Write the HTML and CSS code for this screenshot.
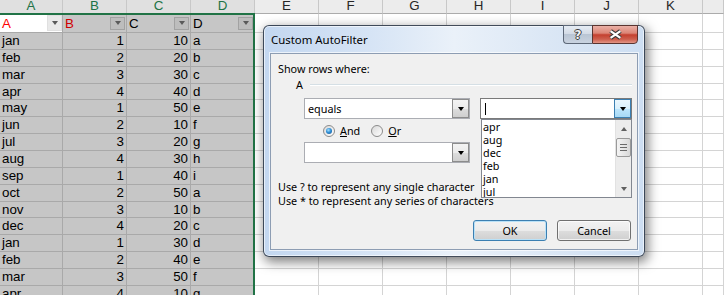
FILE: index.html
```html
<!DOCTYPE html>
<html>
<head>
<meta charset="utf-8">
<title>Custom AutoFilter</title>
<link rel="stylesheet" href="styles.css">
</head>
<body>
<div class="sheet">
  <div class="hc sel">A</div><div class="hc sel">B</div><div class="hc sel">C</div><div class="hc sel">D</div>
  <div class="hc">E</div><div class="hc">F</div><div class="hc">G</div><div class="hc">H</div><div class="hc">I</div><div class="hc">J</div><div class="hc">K</div><div class="hc"></div>

  <div class="fc act"><span class="red">A</span><span class="dd"></span></div>
  <div class="fc"><span class="red2">B</span><span class="dd"></span></div>
  <div class="fc"><span>C</span><span class="dd"></span></div>
  <div class="fc"><span>D</span><span class="dd"></span></div>
  <div class="e"></div><div class="e"></div><div class="e"></div><div class="e"></div><div class="e"></div><div class="e"></div><div class="e"></div><div class="e"></div>

  <div class="g">jan</div><div class="g n">1</div><div class="g n">10</div><div class="g">a</div>
  <div class="e"></div><div class="e"></div><div class="e"></div><div class="e"></div><div class="e"></div><div class="e"></div><div class="e"></div><div class="e"></div>
  <div class="g">feb</div><div class="g n">2</div><div class="g n">20</div><div class="g">b</div>
  <div class="e"></div><div class="e"></div><div class="e"></div><div class="e"></div><div class="e"></div><div class="e"></div><div class="e"></div><div class="e"></div>
  <div class="g">mar</div><div class="g n">3</div><div class="g n">30</div><div class="g">c</div>
  <div class="e"></div><div class="e"></div><div class="e"></div><div class="e"></div><div class="e"></div><div class="e"></div><div class="e"></div><div class="e"></div>
  <div class="g">apr</div><div class="g n">4</div><div class="g n">40</div><div class="g">d</div>
  <div class="e"></div><div class="e"></div><div class="e"></div><div class="e"></div><div class="e"></div><div class="e"></div><div class="e"></div><div class="e"></div>
  <div class="g">may</div><div class="g n">1</div><div class="g n">50</div><div class="g">e</div>
  <div class="e"></div><div class="e"></div><div class="e"></div><div class="e"></div><div class="e"></div><div class="e"></div><div class="e"></div><div class="e"></div>
  <div class="g">jun</div><div class="g n">2</div><div class="g n">10</div><div class="g">f</div>
  <div class="e"></div><div class="e"></div><div class="e"></div><div class="e"></div><div class="e"></div><div class="e"></div><div class="e"></div><div class="e"></div>
  <div class="g">jul</div><div class="g n">3</div><div class="g n">20</div><div class="g">g</div>
  <div class="e"></div><div class="e"></div><div class="e"></div><div class="e"></div><div class="e"></div><div class="e"></div><div class="e"></div><div class="e"></div>
  <div class="g">aug</div><div class="g n">4</div><div class="g n">30</div><div class="g">h</div>
  <div class="e"></div><div class="e"></div><div class="e"></div><div class="e"></div><div class="e"></div><div class="e"></div><div class="e"></div><div class="e"></div>
  <div class="g">sep</div><div class="g n">1</div><div class="g n">40</div><div class="g">i</div>
  <div class="e"></div><div class="e"></div><div class="e"></div><div class="e"></div><div class="e"></div><div class="e"></div><div class="e"></div><div class="e"></div>
  <div class="g">oct</div><div class="g n">2</div><div class="g n">50</div><div class="g">a</div>
  <div class="e"></div><div class="e"></div><div class="e"></div><div class="e"></div><div class="e"></div><div class="e"></div><div class="e"></div><div class="e"></div>
  <div class="g">nov</div><div class="g n">3</div><div class="g n">10</div><div class="g">b</div>
  <div class="e"></div><div class="e"></div><div class="e"></div><div class="e"></div><div class="e"></div><div class="e"></div><div class="e"></div><div class="e"></div>
  <div class="g">dec</div><div class="g n">4</div><div class="g n">20</div><div class="g">c</div>
  <div class="e"></div><div class="e"></div><div class="e"></div><div class="e"></div><div class="e"></div><div class="e"></div><div class="e"></div><div class="e"></div>
  <div class="g">jan</div><div class="g n">1</div><div class="g n">30</div><div class="g">d</div>
  <div class="e"></div><div class="e"></div><div class="e"></div><div class="e"></div><div class="e"></div><div class="e"></div><div class="e"></div><div class="e"></div>
  <div class="g">feb</div><div class="g n">2</div><div class="g n">40</div><div class="g">e</div>
  <div class="e"></div><div class="e"></div><div class="e"></div><div class="e"></div><div class="e"></div><div class="e"></div><div class="e"></div><div class="e"></div>
  <div class="g">mar</div><div class="g n">3</div><div class="g n">50</div><div class="g">f</div>
  <div class="e"></div><div class="e"></div><div class="e"></div><div class="e"></div><div class="e"></div><div class="e"></div><div class="e"></div><div class="e"></div>
  <div class="g">apr</div><div class="g n">4</div><div class="g n">10</div><div class="g">g</div>
  <div class="e"></div><div class="e"></div><div class="e"></div><div class="e"></div><div class="e"></div><div class="e"></div><div class="e"></div><div class="e"></div>
</div>

<div class="selection"></div>

<div class="dlg">
  <div class="tbar">
    <span class="title">Custom AutoFilter</span>
    <div class="tbtns">
      <span class="help"><span class="q">?</span></span>
      <span class="close">
        <svg width="45" height="18" viewBox="0 0 45 18">
          <path d="M18 5 L28 12 M28 5 L18 12" stroke="#3a3a3a" stroke-width="4.4" fill="none"/>
          <path d="M18 5 L28 12 M28 5 L18 12" stroke="#ffffff" stroke-width="2.2" fill="none"/>
        </svg>
      </span>
    </div>
  </div>
  <div class="client">
    <div class="show">Show rows where:</div>
    <div class="legend"><span>A</span><span class="rule"></span></div>
    <div class="crit">
      <div class="combo"><span class="txt">equals</span><span class="btn"></span></div>
      <div class="combo value">
        <span class="caret"></span><span class="btn hot"></span>
        <div class="list">
          <div class="items">
            <div>apr</div><div>aug</div><div>dec</div><div>feb</div><div>jan</div><div>jul</div>
          </div>
          <div class="sb">
            <span class="arr up"></span>
            <span class="thumb"><span></span><span></span><span></span></span>
            <span class="arr down"></span>
          </div>
        </div>
      </div>
    </div>
    <div class="radios">
      <span class="radio on"></span><span class="lbl"><u>A</u>nd</span>
      <span class="radio off"></span><span class="lbl"><u>O</u>r</span>
    </div>
    <div class="crit second">
      <div class="combo"><span class="txt"></span><span class="btn"></span></div>
    </div>
    <div class="hints">
      <div>Use ? to represent any single character</div>
      <div>Use * to represent any series of characters</div>
    </div>
    <div class="actions">
      <span class="pbtn def">OK</span>
      <span class="pbtn">Cancel</span>
    </div>
  </div>
</div>
</body>
</html>
```

FILE: styles.css
```css
* { box-sizing: border-box; }

html, body {
  margin: 0;
  padding: 0;
  width: 724px;
  height: 295px;
  overflow: hidden;
  background: #ffffff;
}

body {
  position: relative;
  font-family: "Liberation Sans", Arial, sans-serif;
}

/* ---------- spreadsheet ---------- */
.sheet {
  display: grid;
  grid-template-columns: 63px repeat(10, 64px) 21px;
  grid-template-rows: 14px 19px;
  grid-auto-rows: 16.87px;
  width: 724px;
  height: 295px;
  overflow: hidden;
  font-size: 13.33px;
  color: #000;
}

.hc {
  background: #ececec;
  border-right: 1px solid #c8c8c8;
  border-bottom: 1px solid #ababab;
  text-align: center;
  line-height: 11px;
  color: #262626;
  overflow: hidden;
}
.hc.sel {
  background: #e0e0e0;
  color: #217346;
  border-bottom-color: #217346;
}

.fc {
  display: flex;
  align-items: center;
  justify-content: space-between;
  padding-left: 2px;
  background: #c6c6c6;
  border-right: 1px solid #a9a9a9;
  border-bottom: 1px solid #a9a9a9;
}
.fc.act { background: #ffffff; }
.red { color: #ff0000; }
.red2 { color: #d00000; }

.dd {
  width: 15px;
  height: 13px;
  margin-right: 1px;
  background: #bdbdbd;
  border: 1px solid #a2a2a2;
  display: flex;
  align-items: center;
  justify-content: center;
}
.dd::after {
  content: "";
  border-left: 3.5px solid transparent;
  border-right: 3.5px solid transparent;
  border-top: 4px solid #5a5a5a;
}
.act .dd {
  height: 16px;
  margin-right: 0;
  background: #e9e9e9;
  border-color: #e0e0e0;
}

.g {
  background: #c6c6c6;
  border-right: 1px solid #a9a9a9;
  border-bottom: 1px solid #a9a9a9;
  padding: 0 2px;
  line-height: 16px;
  white-space: nowrap;
  overflow: hidden;
}
.g.n { text-align: right; }

.e {
  border-right: 1px solid #d4d4d4;
  border-bottom: 1px solid #d4d4d4;
}

.selection {
  position: absolute;
  left: -3px;
  top: 13px;
  width: 258px;
  height: 282px;
  border: 2px solid #217346;
  border-bottom: none;
}

/* ---------- dialog ---------- */
.dlg {
  position: absolute;
  left: 263px;
  top: 25px;
  width: 382px;
  height: 232px;
  border: 1px solid rgba(25, 35, 50, 0.8);
  border-radius: 6px;
  background: linear-gradient(90deg, #c3d7f0 0%, #d6e4f5 28%, #eaf1f9 50%, #dbe7f5 75%, #cddef2 100%);
  box-shadow: 2px 4px 12px 1px rgba(0, 0, 0, 0.5), inset 0 0 0 1px rgba(255, 255, 255, 0.6);
  display: flex;
  flex-direction: column;
  font-family: "Noto Sans", "Open Sans", sans-serif;
  font-size: 10.8px;
  color: #000;
}

.tbar {
  height: 27px;
  display: flex;
  align-items: flex-start;
  padding-left: 7px;
  padding-right: 6px;
}
.title {
  margin-top: 7px;
  font-size: 11.4px;
  line-height: 14px;
}
.tbtns {
  margin-left: auto;
  margin-top: -1px;
  display: flex;
}
.help {
  width: 29px;
  height: 19px;
  border: 1px solid #5d6878;
  border-right: none;
  border-radius: 0 0 0 4px;
  background: linear-gradient(#e6ecf4 0%, #d3dbe6 45%, #b9c5d4 50%, #c9d3e0 100%);
  display: flex;
  align-items: center;
  justify-content: center;
}
.q {
  font-family: "DejaVu Sans", sans-serif;
  font-weight: bold;
  font-size: 12px;
  line-height: 14px;
  color: #f2f2f2;
  text-shadow: 1px 0 0 #3c3c3c, -1px 0 0 #3c3c3c, 0 1px 0 #3c3c3c, 0 -1px 0 #3c3c3c;
}
.close {
  width: 46px;
  height: 19px;
  border: 1px solid #5a3430;
  border-radius: 0 0 4px 0;
  background: linear-gradient(#eab0a6 0%, #dc8576 42%, #c4402f 52%, #cd5f4e 78%, #e39686 100%);
  display: flex;
}

.client {
  flex: 1;
  margin: 0 6px 6px;
  background: #f0f0f0;
  border: 1px solid #8d9db3;
  box-shadow: 0 0 0 1px rgba(255, 255, 255, 0.65);
  display: flex;
  flex-direction: column;
}

.show {
  margin: 8px 0 0 7px;
  line-height: 14px;
}

.legend {
  display: flex;
  align-items: center;
  margin: 2px 0 0 25px;
  padding-right: 5px;
  line-height: 14px;
}
.rule {
  flex: 1;
  margin-left: 7px;
  height: 2px;
  border-top: 1px solid #d5dfe5;
  border-bottom: 1px solid #ffffff;
}

.crit {
  display: flex;
  margin: 6px 0 0 33px;
}
.crit.second { margin-top: 4px; }

.combo {
  position: relative;
  width: 166px;
  height: 21px;
  border: 1px solid #abadb3;
  background: #ffffff;
  display: flex;
  align-items: center;
}
.combo .txt {
  flex: 1;
  padding-left: 3px;
  line-height: 14px;
}
.combo .btn {
  width: 17px;
  height: 19px;
  margin-left: auto;
  border: 1px solid #8c8c8c;
  background: linear-gradient(#f3f3f3 0%, #ebebeb 50%, #dddddd 51%, #cfcfcf 100%);
  display: flex;
  align-items: center;
  justify-content: center;
}
.combo .btn::after {
  content: "";
  border-left: 3.5px solid transparent;
  border-right: 3.5px solid transparent;
  border-top: 4px solid #000;
}
.combo .btn.hot {
  border-color: #3c7fb1;
  background: linear-gradient(#eaf6fd 0%, #d9f0fc 50%, #bee6fd 51%, #a7d9f5 100%);
}

.combo.value {
  width: 152px;
  margin-left: 10px;
  border-color: #7a7a7a;
}
.caret {
  width: 1px;
  height: 12px;
  margin-left: 4px;
  background: #000;
}

.list {
  position: absolute;
  left: 0;
  top: 20px;
  width: 151px;
  height: 79px;
  border: 1px solid #828790;
  background: #ffffff;
  display: flex;
  z-index: 2;
}
.items {
  flex: 1;
  padding: 0 0 0 1px;
  line-height: 13px;
  overflow: hidden;
}
.sb {
  width: 16px;
  background: #ececec;
  border-left: 1px solid #e2e2e2;
  display: flex;
  flex-direction: column;
}
.arr {
  height: 17px;
  display: flex;
  align-items: center;
  justify-content: center;
}
.arr.up::after {
  content: "";
  border-left: 3.5px solid transparent;
  border-right: 3.5px solid transparent;
  border-bottom: 4px solid #606060;
}
.arr.down { margin-top: auto; }
.arr.down::after {
  content: "";
  border-left: 3.5px solid transparent;
  border-right: 3.5px solid transparent;
  border-top: 4px solid #606060;
}
.thumb {
  height: 19px;
  margin: 1px 0 0 0;
  border: 1px solid #9a9a9a;
  border-radius: 2px;
  background: linear-gradient(90deg, #f4f4f4, #e4e4e4 60%, #d8d8d8);
  display: flex;
  flex-direction: column;
  align-items: center;
  justify-content: center;
  gap: 2px;
}
.thumb span {
  width: 7px;
  height: 1px;
  background: #6a6a6a;
}

.radios {
  display: flex;
  align-items: center;
  height: 14px;
  margin: 5px 0 0 52px;
}
.radio {
  width: 12px;
  height: 12px;
  border-radius: 50%;
  border: 1px solid #8b8b8b;
  background: linear-gradient(135deg, #d9d9d9, #ffffff);
  display: flex;
  align-items: center;
  justify-content: center;
}
.radio.on::after {
  content: "";
  width: 6px;
  height: 6px;
  border-radius: 50%;
  background: radial-gradient(circle at 40% 35%, #a6e1ff 0%, #2f8fd6 45%, #174f8c 100%);
}
.lbl {
  margin-left: 5px;
  margin-right: 11px;
  line-height: 14px;
}

.hints {
  margin: 17px 0 0 7px;
  line-height: 14px;
  white-space: nowrap;
}

.actions {
  display: flex;
  justify-content: flex-end;
  gap: 10px;
  margin-top: 12px;
  padding-right: 6px;
}
.pbtn {
  width: 74px;
  height: 21px;
  border: 1px solid #707070;
  border-radius: 3px;
  background: linear-gradient(#f2f2f2 0%, #ebebeb 50%, #dddddd 51%, #cfcfcf 100%);
  box-shadow: inset 0 0 0 1px rgba(255, 255, 255, 0.7);
  text-align: center;
  line-height: 19px;
}
.pbtn.def {
  border-color: #3c7fb1;
  box-shadow: inset 0 0 0 1px #b9e1f7;
}
```
